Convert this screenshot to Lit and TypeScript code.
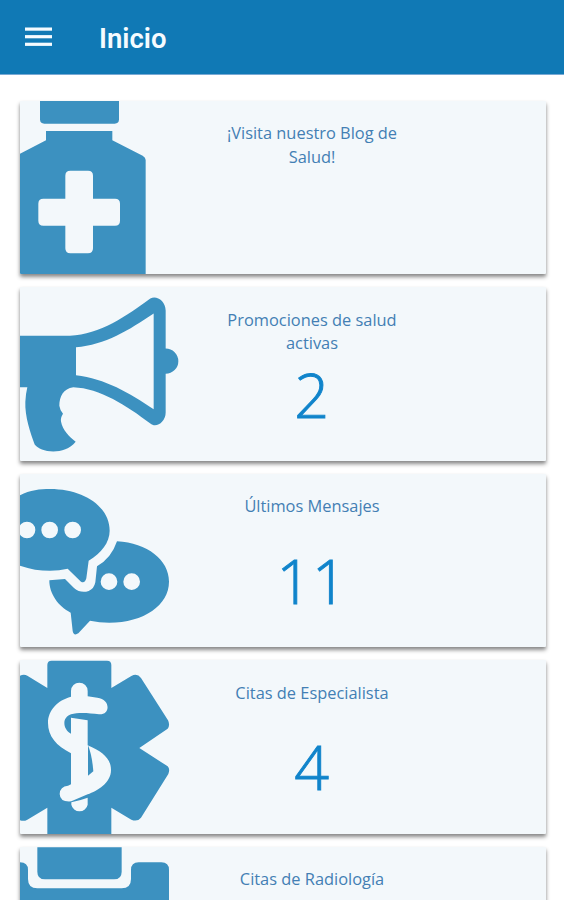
import { LitElement, html, svg, css } from "lit";
import { customElement, property } from "lit/decorators.js";

const bottle = svg`
  <path d="M90 33H327V88Q327 101 314 101H103Q90 101 90 88Z"/>
  <path fill-rule="evenodd" d="M108 123H307V151L398 197Q407 202 407 210V555H30V191L108 151Z
    M181 242Q166 242 166 257V326H100Q85 326 85 341V392Q85 407 100 407H166V475Q166 490 181 490H234Q249 490 249 475V407H315Q330 407 330 392V341Q330 326 315 326H249V257Q249 242 234 242Z"/>`;

const megaphone = svg`
  <path fill-rule="evenodd" d="M30 168H180C270 164 350 108 421 56C438 45 467 62 467 92V206A38 38 0 0 1 467 282V398C467 427 438 446 421 431C350 377 270 325 190 322C160 326 148 350 148 378Q150 392 159 402Q151 415 153 425C158 452 178 470 197 486C180 508 154 515 130 515C104 515 84 506 74 494C62 462 44 410 46 366Q47 342 52 322H30Z
    M198 202V286C285 296 358 339 431 388V101C358 150 285 196 198 202Z"/>`;

const chat = svg`
  <path fill-rule="evenodd" d="M0 110C40 78 80 72 120 72C222 72 299 125 299 197C299 232 274 265 236 287L229 340Q224 357 213 350L173 311Q148 317 120 317C80 317 45 310 0 290Z
    M51 170A25 25 0 1 0 51 220A25 25 0 1 0 51 170Z M119 170A25 25 0 1 0 119 220A25 25 0 1 0 119 170Z M188 170A25 25 0 1 0 188 220A25 25 0 1 0 188 170Z"/>
  <path fill-rule="evenodd" d="M321 229C412 234 477 285 477 350C477 420 402 473 298 473Q268 473 240 467L205 505Q191 514 188 498L182 443C145 425 117 385 118 346L165 342L192 369Q212 386 236 378Q252 372 256 352L261 304Q304 280 321 229Z
    M297 325A25 25 0 1 0 297 375A25 25 0 1 0 297 325Z M365 325A25 25 0 1 0 365 375A25 25 0 1 0 365 325Z"/>`;

const medical = svg`
  <path d="M112 46Q112 33 125 33H291Q304 33 304 46V115L364 79Q382 70 393 85L474 212Q481 226 473 237L388 295L473 350Q481 358 475 373L393 504Q382 518 364 510L304 474V560H112V474L52 510Q42 516 30 512V78Q42 72 52 78L112 115Z"/>
  <g class="cut">
    <path d="M183 124A25 25 0 0 1 233 124V140L262 144C302 148 302 196 267 194C238 190 206 187 183 194C155 204 158 238 183 252V204L233 212V287C278 306 303 327 303 361C303 400 262 424 233 434L184 455Q150 458 149 433Q150 410 174 408L183 404V311C139 288 114 260 114 220C114 181 143 152 183 141Z"/>
    <path d="M184 458Q211 452 233 444V465A25 25 0 0 1 184 465Z"/>
  </g>
  <path d="M234 287Q246 316 250 365L234 378Z"/>`;

const clipboard = svg`
  <path d="M82 81H335V154Q335 177 312 177H105Q82 177 82 154Z"/>
  <path d="M30 126Q54 126 54 149V176Q54 204 82 204H335Q363 204 363 176V149Q363 126 386 126H454Q477 126 477 149V600H30Z"/>`;

@customElement("app-bar")
export class AppBar extends LitElement {
  @property() heading = "";
  static styles = css`
    :host {
      display: flex;
      align-items: center;
      box-sizing: border-box;
      height: 75px;
      padding: 0 25px 1px;
      gap: 47px;
      background: #1079b5;
      border-bottom: 1px solid #78a9d4;
      color: #f5fbff;
    }
    .menu { display: block; width: 27px; height: 20px; fill: currentColor; }
    .title {
      margin: 4px 0 0;
      font: 600 27.5px/36px Roboto, sans-serif;
    }
  `;
  render() {
    return html`
      <svg class="menu" viewBox="0 0 27 20" aria-label="Menú">
        <rect y="0.5" width="27" height="3.2"/><rect y="8.1" width="27" height="3.2"/><rect y="15.7" width="27" height="3.2"/>
      </svg>
      <h1 class="title">${this.heading}</h1>`;
  }
}

@customElement("summary-card")
export class SummaryCard extends LitElement {
  @property() label = "";
  @property() count = "";
  @property() box = "";
  @property({ attribute: false }) icon: unknown;
  static styles = css`
    :host {
      display: grid;
      grid-template-columns: 160px 1fr;
      height: 173.3px;
      flex: none;
      overflow: hidden;
      border-radius: 1px;
      background: #f3f8fb;
      box-shadow: 0 3px 4px rgba(0, 0, 0, 0.42), 0 2px 3px rgba(0, 0, 0, 0.1);
    }
    .icon { display: block; width: 160px; height: 173.3px; fill: #3c91c0; }
    .cut { fill: #f3f8fb; }
    .info {
      display: flex;
      flex-direction: column;
      align-items: center;
      width: 184px;
      margin-left: 40px;
      padding-top: 20.3px;
      text-align: center;
      font-family: "Open Sans", sans-serif;
    }
    .label {
      display: flex;
      flex: none;
      align-items: flex-start;
      justify-content: center;
      min-height: 46px;
      margin: 0;
      font-size: 16.4px;
      line-height: 23.3px;
      font-weight: 400;
      color: #437fb4;
    }
    .count {
      margin-top: 10.5px;
      font-size: 61px;
      line-height: 60px;
      font-weight: 300;
      letter-spacing: 0.6px;
      color: #1084cb;
      -webkit-text-stroke: 0.9px #1084cb;
    }
  `;
  render() {
    return html`
      <svg class="icon" viewBox=${this.box} preserveAspectRatio="none" aria-hidden="true">${this.icon}</svg>
      <div class="info">
        <h2 class="label">${this.label}</h2>
        <div class="count">${this.count}</div>
      </div>`;
  }
}

const cards = [
  { label: "¡Visita nuestro Blog de Salud!", count: "", icon: bottle, box: "30 33 480 520" },
  { label: "Promociones de salud activas", count: "2", icon: megaphone, box: "30 21.5 480 520" },
  { label: "Últimos Mensajes", count: "11", icon: chat, box: "30 27 480 520" },
  { label: "Citas de Especialista", count: "4", icon: medical, box: "30 31 480 520" },
  { label: "Citas de Radiología", count: "", icon: clipboard, box: "30 80 480 520" },
];

@customElement("app-root")
export class AppRoot extends LitElement {
  static styles = css`
    :host {
      display: flex;
      flex-direction: column;
      height: 900px;
      overflow: hidden;
      background: #fff;
    }
    .list {
      display: flex;
      flex-direction: column;
      flex: 1;
      min-height: 0;
      gap: 13.2px;
      padding: 26px 18px 0 20px;
      overflow: hidden;
    }
  `;
  render() {
    return html`
      <app-bar heading="Inicio"></app-bar>
      <main class="list">
        ${cards.map((c) => html`<summary-card .label=${c.label} .count=${c.count} .box=${c.box} .icon=${c.icon}></summary-card>`)}
      </main>`;
  }
}
